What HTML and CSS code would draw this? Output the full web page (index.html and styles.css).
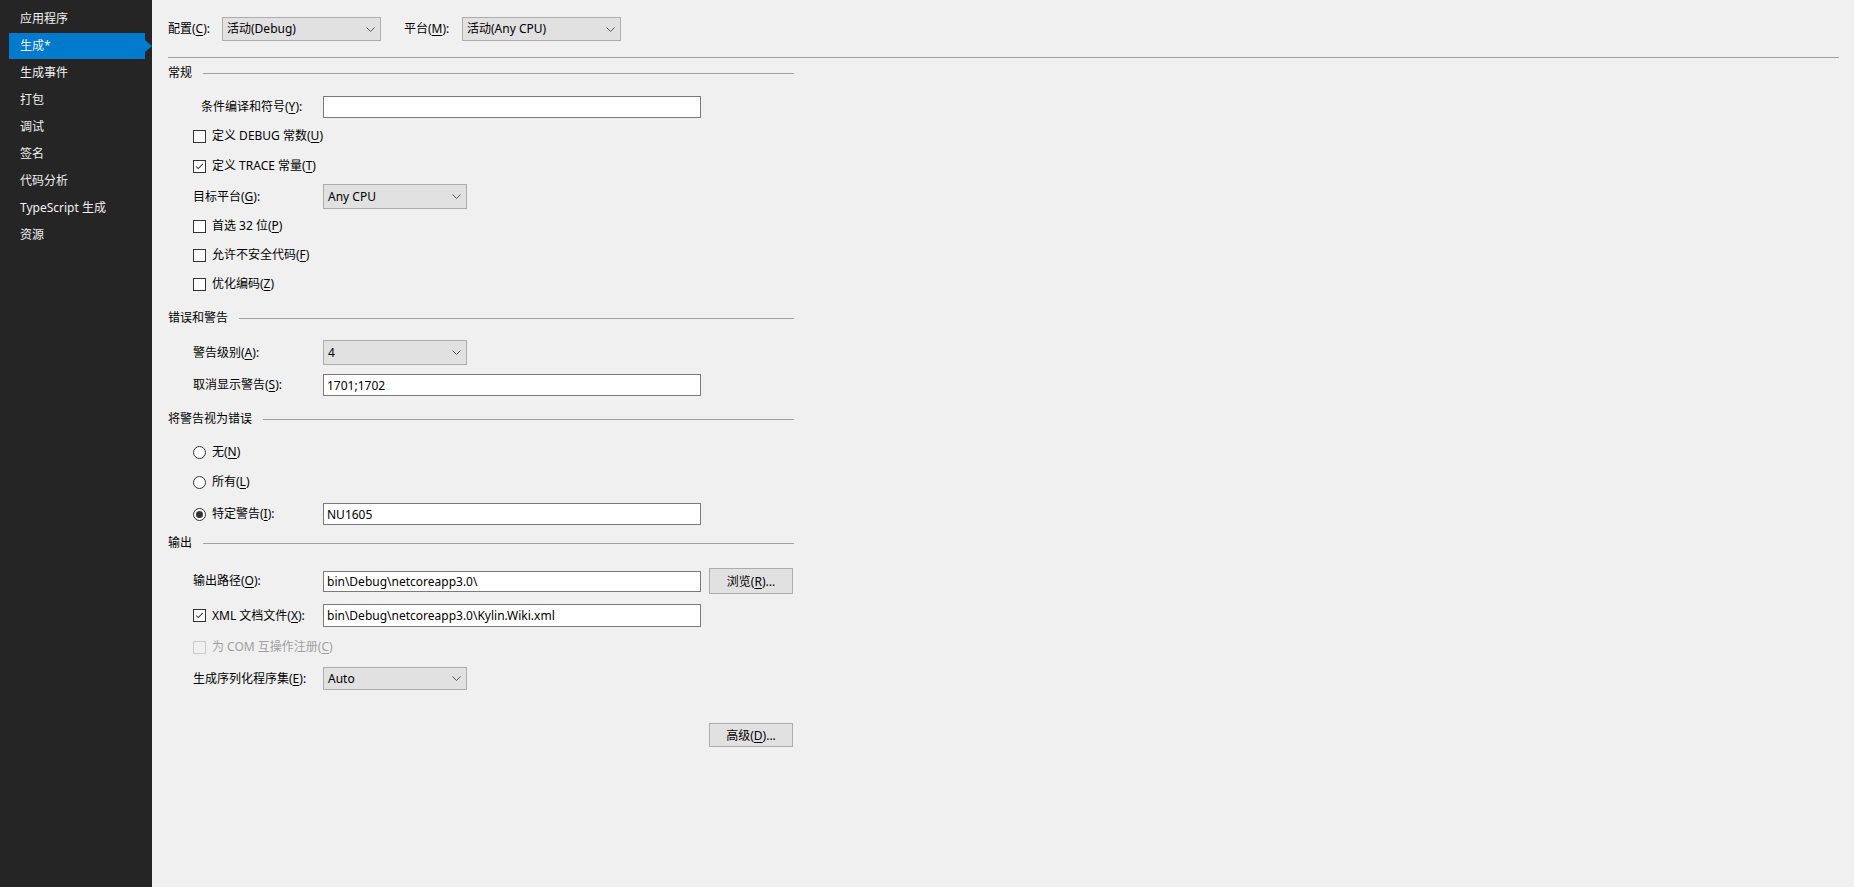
FILE: index.html
```html
<!DOCTYPE html>
<html lang="zh-CN">
<head>
    <meta charset="UTF-8">
    <title>项目属性 - 生成</title>
    <link rel="stylesheet" href="styles.css">
</head>
<body>
    <div class="page">
        <nav class="sidebar">
            <div class="nav-item">应用程序</div>
            <div class="nav-item active">生成*</div>
            <div class="nav-item">生成事件</div>
            <div class="nav-item">打包</div>
            <div class="nav-item">调试</div>
            <div class="nav-item">签名</div>
            <div class="nav-item">代码分析</div>
            <div class="nav-item">TypeScript 生成</div>
            <div class="nav-item">资源</div>
        </nav>

        <main class="content">
            <div class="topbar">
                <span class="top-label cfg">配置(<u>C</u>):</span>
                <div class="dropdown top-dd">
                    <span>活动(Debug)</span>
                    <svg class="chevron" viewBox="0 0 9 5"><polyline points="0.5,0.5 4.5,4.5 8.5,0.5"/></svg>
                </div>
                <span class="top-label plat">平台(<u>M</u>):</span>
                <div class="dropdown top-dd">
                    <span>活动(Any CPU)</span>
                    <svg class="chevron" viewBox="0 0 9 5"><polyline points="0.5,0.5 4.5,4.5 8.5,0.5"/></svg>
                </div>
            </div>
            <div class="top-rule"></div>

            <div class="form">
                <!-- 常规 -->
                <div class="section-head"><span>常规</span><div class="rule"></div></div>

                <div class="row r-first">
                    <span class="label shift">条件编译和符号(<u>Y</u>):</span>
                    <input class="textbox" type="text" value="">
                </div>
                <div class="row r-cb">
                    <span class="check"></span>
                    <span>定义 DEBUG 常数(<u>U</u>)</span>
                </div>
                <div class="row r-cb r-trace">
                    <span class="check checked"><svg viewBox="0 0 13 13"><polyline points="2.5,6.5 5,9 10.5,3.5"/></svg></span>
                    <span>定义 TRACE 常量(<u>T</u>)</span>
                </div>
                <div class="row r-dd r-target">
                    <span class="label">目标平台(<u>G</u>):</span>
                    <div class="dropdown small-dd">
                        <span>Any CPU</span>
                        <svg class="chevron" viewBox="0 0 9 5"><polyline points="0.5,0.5 4.5,4.5 8.5,0.5"/></svg>
                    </div>
                </div>
                <div class="row r-cb r-after-dd">
                    <span class="check"></span>
                    <span>首选 32 位(<u>P</u>)</span>
                </div>
                <div class="row r-cb">
                    <span class="check"></span>
                    <span>允许不安全代码(<u>F</u>)</span>
                </div>
                <div class="row r-cb">
                    <span class="check"></span>
                    <span>优化编码(<u>Z</u>)</span>
                </div>

                <!-- 错误和警告 -->
                <div class="section-head"><span>错误和警告</span><div class="rule"></div></div>

                <div class="row r-dd r-first-dd">
                    <span class="label">警告级别(<u>A</u>):</span>
                    <div class="dropdown small-dd">
                        <span>4</span>
                        <svg class="chevron" viewBox="0 0 9 5"><polyline points="0.5,0.5 4.5,4.5 8.5,0.5"/></svg>
                    </div>
                </div>
                <div class="row r-input">
                    <span class="label">取消显示警告(<u>S</u>):</span>
                    <input class="textbox" type="text" value="1701;1702">
                </div>

                <!-- 将警告视为错误 -->
                <div class="section-head"><span>将警告视为错误</span><div class="rule"></div></div>

                <div class="row r-radio-first">
                    <span class="radio"></span>
                    <span>无(<u>N</u>)</span>
                </div>
                <div class="row r-cb r-all">
                    <span class="radio"></span>
                    <span>所有(<u>L</u>)</span>
                </div>
                <div class="row r-input r-specific">
                    <span class="radio-label">
                        <span class="radio on"></span>
                        <span>特定警告(<u>I</u>):</span>
                    </span>
                    <input class="textbox" type="text" value="NU1605">
                </div>

                <!-- 输出 -->
                <div class="section-head sh-output"><span>输出</span><div class="rule"></div></div>

                <div class="row r-path">
                    <span class="label">输出路径(<u>O</u>):</span>
                    <input class="textbox" type="text" value="bin\Debug\netcoreapp3.0\">
                    <button class="btn">浏览(<u>R</u>)...</button>
                </div>
                <div class="row r-input r-xml">
                    <span class="radio-label">
                        <span class="check checked"><svg viewBox="0 0 13 13"><polyline points="2.5,6.5 5,9 10.5,3.5"/></svg></span>
                        <span>XML 文档文件(<u>X</u>):</span>
                    </span>
                    <input class="textbox" type="text" value="bin\Debug\netcoreapp3.0\Kylin.Wiki.xml">
                </div>
                <div class="row r-cb r-com disabled">
                    <span class="check"></span>
                    <span>为 COM 互操作注册(<u>C</u>)</span>
                </div>
                <div class="row r-dd r-serial">
                    <span class="label">生成序列化程序集(<u>E</u>):</span>
                    <div class="dropdown small-dd">
                        <span>Auto</span>
                        <svg class="chevron" viewBox="0 0 9 5"><polyline points="0.5,0.5 4.5,4.5 8.5,0.5"/></svg>
                    </div>
                </div>

                <div class="advanced">
                    <button class="btn">高级(<u>D</u>)...</button>
                </div>
            </div>
        </main>
    </div>
</body>
</html>
```
FILE: styles.css
```css
* {
    margin: 0;
    padding: 0;
    box-sizing: border-box;
}

body {
    font-family: "Noto Sans", "Noto Sans CJK SC", sans-serif;
    font-size: 12px;
    line-height: 16px;
    color: #000;
    background-color: #f0f0f0;
}

.page {
    display: flex;
    min-height: 100vh;
}

u {
    text-decoration-thickness: 1px;
    text-underline-offset: 2px;
}

/* Sidebar */
.sidebar {
    width: 152px;
    flex-shrink: 0;
    background-color: #252526;
    padding-top: 6px;
}

.nav-item {
    position: relative;
    height: 27px;
    line-height: 26px;
    margin-left: 9px;
    width: 136px;
    padding-left: 11px;
    color: #f1f1f1;
}

.nav-item.active {
    background-color: #007acc;
    height: 26px;
    margin-bottom: 1px;
}

.nav-item.active::after {
    content: "";
    position: absolute;
    right: -7px;
    top: 7px;
    border-top: 6px solid transparent;
    border-bottom: 6px solid transparent;
    border-left: 7px solid #007acc;
}

/* Main */
.content {
    flex: 1;
    padding: 17px 15px 0 16px;
}

.topbar {
    display: flex;
    align-items: center;
    height: 24px;
}

.top-label.cfg {
    width: 54px;
}

.top-label.plat {
    width: 58px;
    margin-left: 23px;
}

.top-rule {
    height: 1px;
    background-color: #a0a0a0;
    margin-top: 16px;
}

.form {
    width: 626px;
}

.section-head {
    display: flex;
    align-items: center;
    height: 16px;
    margin-top: 7px;
}

.section-head .rule {
    flex: 1;
    height: 1px;
    background-color: #a0a0a0;
    margin-left: 11px;
}

.row {
    display: flex;
    align-items: center;
    height: 22px;
    padding-left: 25px;
    margin-top: 7px;
}

.row.r-first { margin-top: 15px; }
.row.r-trace { margin-top: 8px; }
.row.r-dd { height: 25px; margin-top: 8px; }
.row.r-target { margin-top: 7px; }
.row.r-after-dd { margin-top: 6px; }
.row.r-first-dd { margin-top: 14px; }
.row.r-input { margin-top: 9px; }
.row.r-radio-first { margin-top: 14px; }
.row.r-all { margin-top: 8px; }
.row.r-specific { margin-top: 10px; }
.row.r-path { height: 26px; margin-top: 17px; }
.row.r-xml { height: 23px; margin-top: 10px; }
.row.r-com { margin-top: 9px; }
.row.r-serial { height: 23px; margin-top: 9px; }

.section-head + .row,
.row + .section-head {
    margin-top: 15px;
}

.row + .section-head.sh-output {
    margin-top: 10px;
}

.section-head + .row.r-first { margin-top: 15px; }
.section-head + .row.r-first-dd { margin-top: 14px; }
.section-head + .row.r-radio-first { margin-top: 14px; }
.section-head + .row.r-path { margin-top: 17px; }

.label {
    width: 130px;
    flex-shrink: 0;
}

.label.shift {
    padding-left: 8px;
}

.radio-label {
    width: 130px;
    flex-shrink: 0;
    display: flex;
    align-items: center;
}

/* Inputs */
.textbox {
    width: 378px;
    height: 22px;
    border: 1px solid #7a7a7a;
    background-color: #fff;
    padding: 0 3px;
    font-family: inherit;
    font-size: 12px;
    color: #000;
    outline: none;
}

.r-xml .textbox {
    height: 23px;
}

.dropdown {
    display: flex;
    align-items: center;
    justify-content: space-between;
    height: 100%;
    background-color: #e1e1e1;
    border: 1px solid #adadad;
    padding: 0 5px 0 4px;
}

.top-dd {
    width: 159px;
}

.small-dd {
    width: 144px;
}

.chevron {
    width: 9px;
    height: 5px;
    fill: none;
    stroke: #555;
    stroke-width: 1;
}

.btn {
    width: 84px;
    height: 26px;
    margin-left: 8px;
    background-color: #e1e1e1;
    border: 1px solid #adadad;
    font-family: inherit;
    font-size: 12px;
    color: #000;
}

.r-path .textbox {
    height: 21px;
}

.advanced {
    display: flex;
    justify-content: flex-end;
    margin-top: 33px;
}

.advanced .btn {
    height: 24px;
    margin-right: 1px;
}

/* Check boxes and radios */
.check {
    width: 13px;
    height: 13px;
    border: 1px solid #333;
    background-color: #fff;
    margin-right: 6px;
    flex-shrink: 0;
    display: flex;
}

.check svg {
    width: 11px;
    height: 11px;
    fill: none;
    stroke: #333;
    stroke-width: 1.2;
}

.radio {
    width: 13px;
    height: 13px;
    border: 1px solid #333;
    border-radius: 50%;
    background-color: #fff;
    margin-right: 6px;
    flex-shrink: 0;
    display: flex;
    align-items: center;
    justify-content: center;
}

.radio.on::after {
    content: "";
    width: 7px;
    height: 7px;
    border-radius: 50%;
    background-color: #333;
}

.disabled {
    color: #a0a0a0;
}

.disabled .check {
    border-color: #ccc;
    background-color: #f0f0f0;
}
```
